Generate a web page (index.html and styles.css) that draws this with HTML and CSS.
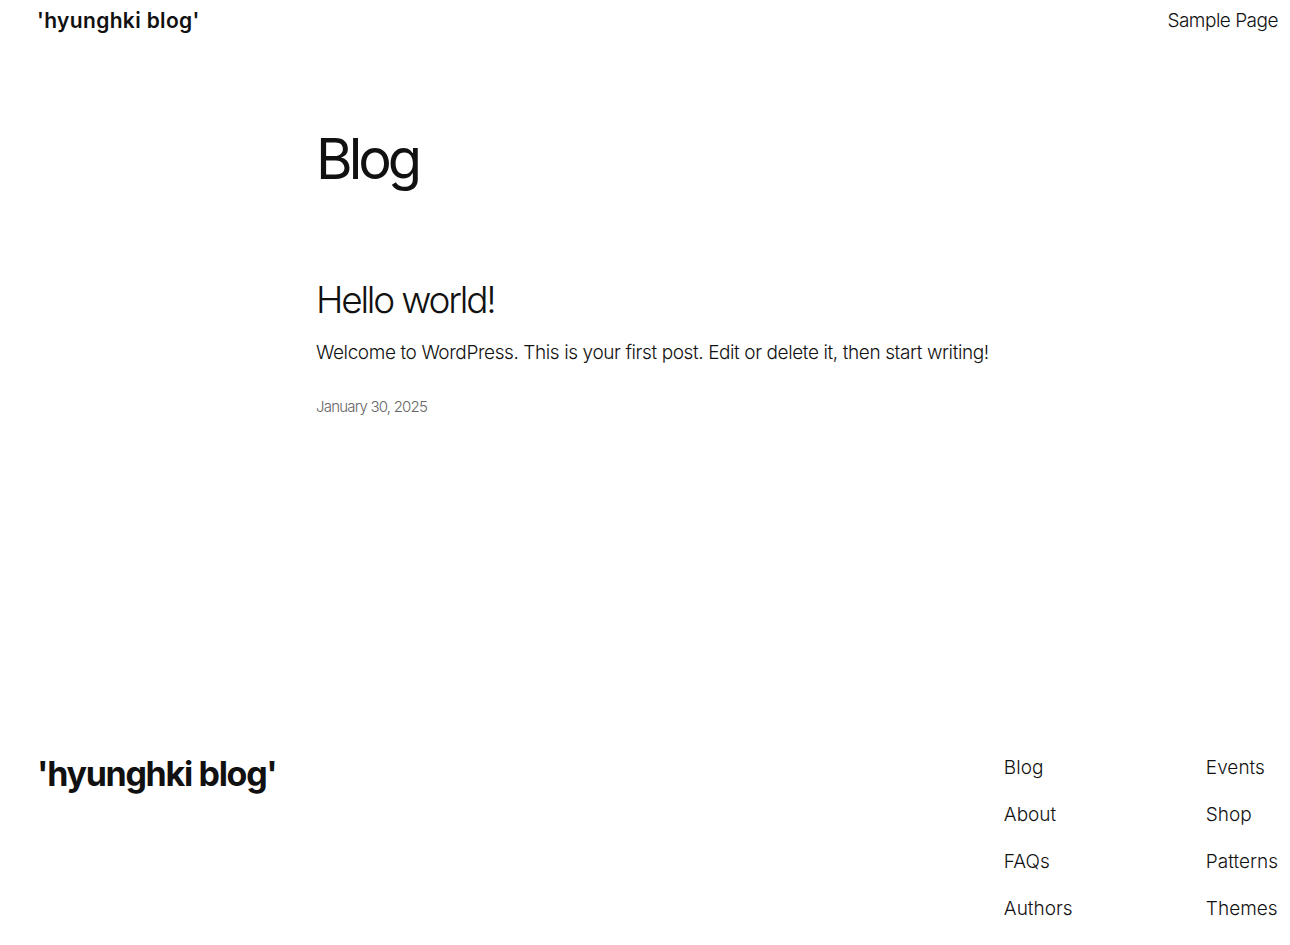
FILE: index.html
```html
<!DOCTYPE html>
<html lang="en">
<head>
    <meta charset="UTF-8">
    <meta name="viewport" content="width=device-width, initial-scale=1.0">
    <title>Blog – 'hyunghki blog'</title>
    <link rel="stylesheet" href="styles.css">
</head>
<body>
    <header class="site-header">
        <a href="#" class="site-title">'hyunghki blog'</a>
        <nav class="header-nav">
            <a href="#">Sample Page</a>
        </nav>
    </header>

    <main class="content">
        <h1 class="page-title">Blog</h1>

        <article class="post">
            <h2 class="post-title"><a href="#">Hello world!</a></h2>
            <p class="post-excerpt">Welcome to WordPress. This is your first post. Edit or delete it, then start writing!</p>
            <time class="post-date">January 30, 2025</time>
        </article>
    </main>

    <footer class="site-footer">
        <a href="#" class="footer-title">'hyunghki blog'</a>
        <div class="footer-links">
            <ul>
                <li><a href="#">Blog</a></li>
                <li><a href="#">About</a></li>
                <li><a href="#">FAQs</a></li>
                <li><a href="#">Authors</a></li>
            </ul>
            <ul>
                <li><a href="#">Events</a></li>
                <li><a href="#">Shop</a></li>
                <li><a href="#">Patterns</a></li>
                <li><a href="#">Themes</a></li>
            </ul>
        </div>
    </footer>
</body>
</html>
```

FILE: styles.css
```css
body {
    margin: 0;
    font-family: Inter, "Liberation Sans", sans-serif;
    font-weight: 300;
    color: #111;
    background: #fff;
}

a {
    color: inherit;
    text-decoration: none;
}

.site-header {
    display: flex;
    justify-content: space-between;
    align-items: center;
    padding: 3px 12px 0 37px;
    height: 34px;
}

.site-title {
    font-size: 21px;
    font-weight: 600;
    letter-spacing: 0.35px;
}

.header-nav a {
    font-size: 19px;
    letter-spacing: -0.5px;
}

.content {
    max-width: 682px;
    margin: 0 auto;
    padding: 89px 0 0 24px;
    min-height: 624px;
}

.page-title {
    margin: 0;
    font-size: 56px;
    font-weight: 400;
    letter-spacing: -4px;
    line-height: 1.2;
}

.post {
    margin-top: 85px;
}

.post-title {
    margin: 0;
    font-size: 37px;
    font-weight: 300;
    letter-spacing: -2.2px;
    line-height: 1.2;
}

.post-excerpt {
    margin: 16px 0 0;
    font-size: 19px;
    letter-spacing: -0.4px;
    line-height: 1.5;
}

.post-date {
    display: block;
    margin-top: 30px;
    font-size: 15px;
    color: #666;
    letter-spacing: -0.8px;
}

.site-footer {
    display: flex;
    justify-content: space-between;
    align-items: flex-start;
    padding: 0 12px 0 37px;
}

.footer-title {
    font-size: 34px;
    font-weight: 700;
    letter-spacing: -1.3px;
    line-height: 1.2;
    margin-top: 4px;
}

.footer-links {
    display: flex;
    margin-top: 4px;
}

.footer-links ul {
    list-style: none;
    margin: 0;
    padding: 0;
    width: 202px;
}

.footer-links ul:last-child {
    width: auto;
}

.footer-links li {
    font-size: 19px;
    letter-spacing: 0;
    line-height: 27px;
    margin-bottom: 20px;
}
```
